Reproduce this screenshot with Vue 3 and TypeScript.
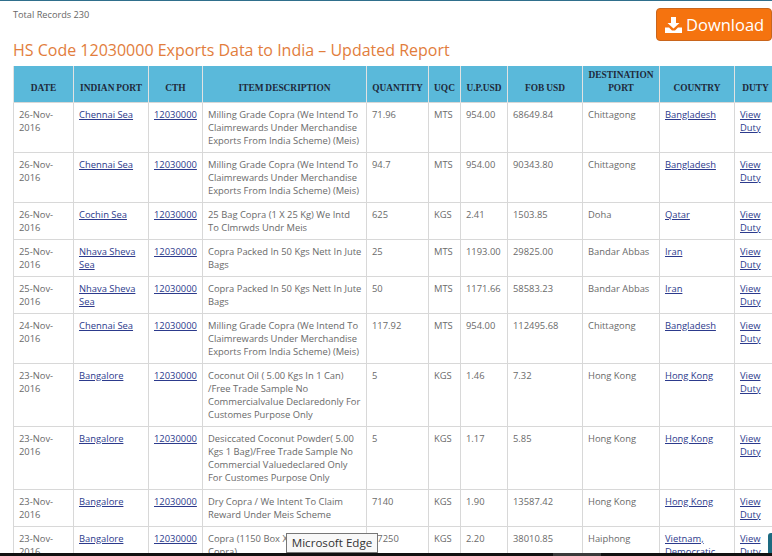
<template>
  <div class="page">
    <div class="top-strip"></div>
    <div class="content">
      <div class="head-row">
        <div class="titles">
          <div class="total">Total Records 230</div>
          <h1 class="title">HS Code 12030000 Exports Data to India – Updated Report</h1>
        </div>
        <button class="download">
          <svg width="17" height="16" viewBox="0 0 17 16"><path d="M6 0h5v6h3.5L8.500 11.500 2.500 6H6z" fill="#fff"/><path d="M0 10.500h4l3 3h3l3-3h4V16H0z" fill="#fff"/></svg>
          Download
        </button>
      </div>
      <table class="records">
        <colgroup>
          <col v-for="(w, i) in colWidths" :key="i" :style="{ width: w + 'px' }" />
        </colgroup>
        <thead>
          <tr>
            <th v-for="h in headers" :key="h">{{ h }}</th>
          </tr>
        </thead>
        <tbody>
          <tr v-for="(r, i) in rows" :key="i">
            <td>{{ r.date }}</td>
            <td><a>{{ r.port }}</a></td>
            <td><a>12030000</a></td>
            <td>{{ r.item }}</td>
            <td>{{ r.qty }}</td>
            <td>{{ r.uqc }}</td>
            <td>{{ r.up }}</td>
            <td>{{ r.fob }}</td>
            <td>{{ r.dest }}</td>
            <td><a>{{ r.country }}</a></td>
            <td><a>View Duty</a></td>
          </tr>
        </tbody>
      </table>
    </div>
    <div class="taskbar"><span class="task-active"></span></div>
    <div class="edge-tip">Microsoft Edge</div>
    <div class="side-tab"></div>
  </div>
</template>

<script setup lang="ts">
interface Row {
  date: string
  port: string
  item: string
  qty: string
  uqc: string
  up: string
  fob: string
  dest: string
  country: string
}

const colWidths = [60, 75, 54, 164, 62, 32, 47, 75, 77, 75, 42]
const headers = ['DATE', 'INDIAN PORT', 'CTH', 'ITEM DESCRIPTION', 'QUANTITY', 'UQC', 'U.P.USD', 'FOB USD', 'DESTINATION PORT', 'COUNTRY', 'DUTY']

const milling = 'Milling Grade Copra (We Intend To Claimrewards Under Merchandise Exports From India Scheme) (Meis)'
const nhava = 'Copra Packed In 50 Kgs Nett In Jute Bags'

const rows: Row[] = [
  { date: '26-Nov-2016', port: 'Chennai Sea', item: milling, qty: '71.96', uqc: 'MTS', up: '954.00', fob: '68649.84', dest: 'Chittagong', country: 'Bangladesh' },
  { date: '26-Nov-2016', port: 'Chennai Sea', item: milling, qty: '94.7', uqc: 'MTS', up: '954.00', fob: '90343.80', dest: 'Chittagong', country: 'Bangladesh' },
  { date: '26-Nov-2016', port: 'Cochin Sea', item: '25 Bag Copra (1 X 25 Kg) We Intd To Clmrwds Undr Meis', qty: '625', uqc: 'KGS', up: '2.41', fob: '1503.85', dest: 'Doha', country: 'Qatar' },
  { date: '25-Nov-2016', port: 'Nhava Sheva Sea', item: nhava, qty: '25', uqc: 'MTS', up: '1193.00', fob: '29825.00', dest: 'Bandar Abbas', country: 'Iran' },
  { date: '25-Nov-2016', port: 'Nhava Sheva Sea', item: nhava, qty: '50', uqc: 'MTS', up: '1171.66', fob: '58583.23', dest: 'Bandar Abbas', country: 'Iran' },
  { date: '24-Nov-2016', port: 'Chennai Sea', item: milling, qty: '117.92', uqc: 'MTS', up: '954.00', fob: '112495.68', dest: 'Chittagong', country: 'Bangladesh' },
  { date: '23-Nov-2016', port: 'Bangalore', item: 'Coconut Oil ( 5.00 Kgs In 1 Can) /Free Trade Sample No Commercialvalue Declaredonly For Customes Purpose Only', qty: '5', uqc: 'KGS', up: '1.46', fob: '7.32', dest: 'Hong Kong', country: 'Hong Kong' },
  { date: '23-Nov-2016', port: 'Bangalore', item: 'Desiccated Coconut Powder( 5.00 Kgs 1 Bag)/Free Trade Sample No Commercial Valuedeclared Only For Customes Purpose Only', qty: '5', uqc: 'KGS', up: '1.17', fob: '5.85', dest: 'Hong Kong', country: 'Hong Kong' },
  { date: '23-Nov-2016', port: 'Bangalore', item: 'Dry Copra / We Intent To Claim Reward Under Meis Scheme', qty: '7140', uqc: 'KGS', up: '1.90', fob: '13587.42', dest: 'Hong Kong', country: 'Hong Kong' },
  { date: '23-Nov-2016', port: 'Bangalore', item: 'Copra (1150 Box X 10 Kgs Dry Copra)', qty: '17250', uqc: 'KGS', up: '2.20', fob: '38010.85', dest: 'Haiphong', country: 'Vietnam, Democratic Rep. Of' },
]
</script>

<style scoped>
.page { position: relative; width: 772px; height: 556px; overflow: hidden; background: #fff; font-family: "Open Sans", "Liberation Sans", sans-serif; color: #666; }
.top-strip { height: 1px; background: #2f6f8c; }
.content { padding: 0 0 0 13px; width: 800px; }
.head-row { display: flex; align-items: flex-start; width: 759px; height: 65px; }
.titles { flex: 1; padding-top: 7px; }
.total { font-size: 9.2px; line-height: 13px; color: #666; }
.title { margin: 18px 0 0; font-size: 16px; line-height: 22px; font-weight: 400; color: #e27d3c; white-space: nowrap; }
.download { display: flex; align-items: center; gap: 4px; width: 116px; height: 33px; margin-top: 7px; padding: 0 0 0 8px; border: 1px solid #c9651c; border-radius: 4px; background: #f5730f; color: #fff; font-family: inherit; font-size: 16.500px; white-space: nowrap; }
.records { table-layout: fixed; width: 763px; border-collapse: collapse; }
.records th { height: 36px; box-sizing: border-box; padding: 0 2px 7px; background: #5ab9da; border: 1px solid #e2e2e2; border-top: 0; border-bottom: 0; font-family: "Liberation Serif", serif; font-size: 9.400px; line-height: 13px; font-weight: 700; word-spacing: -0.5px; color: #1f2a3a; text-align: center; vertical-align: bottom; }
.records td { padding: 5px 3px 5px 5px; border: 1px solid #d8d8d8; font-size: 9.400px; line-height: 13px; color: #6a6a6a; vertical-align: top; }
.records a { color: #2c3a8c; text-decoration: underline; }
.taskbar { position: absolute; left: 0; right: 0; bottom: 0; height: 3px; background: #111; }
.task-active { position: absolute; left: 553px; top: 0; width: 48px; height: 3px; background: #3a3a3a; }
.edge-tip { position: absolute; left: 286px; top: 533px; width: 92px; height: 20px; box-sizing: border-box; border: 1px solid #777; background: #f8f8f8; font-size: 11.600px; line-height: 18px; text-align: center; color: #333; }
.side-tab { position: absolute; right: 0; top: 533px; width: 4px; height: 20px; background: #1d6a80; border-radius: 3px 0 0 0; }
</style>
